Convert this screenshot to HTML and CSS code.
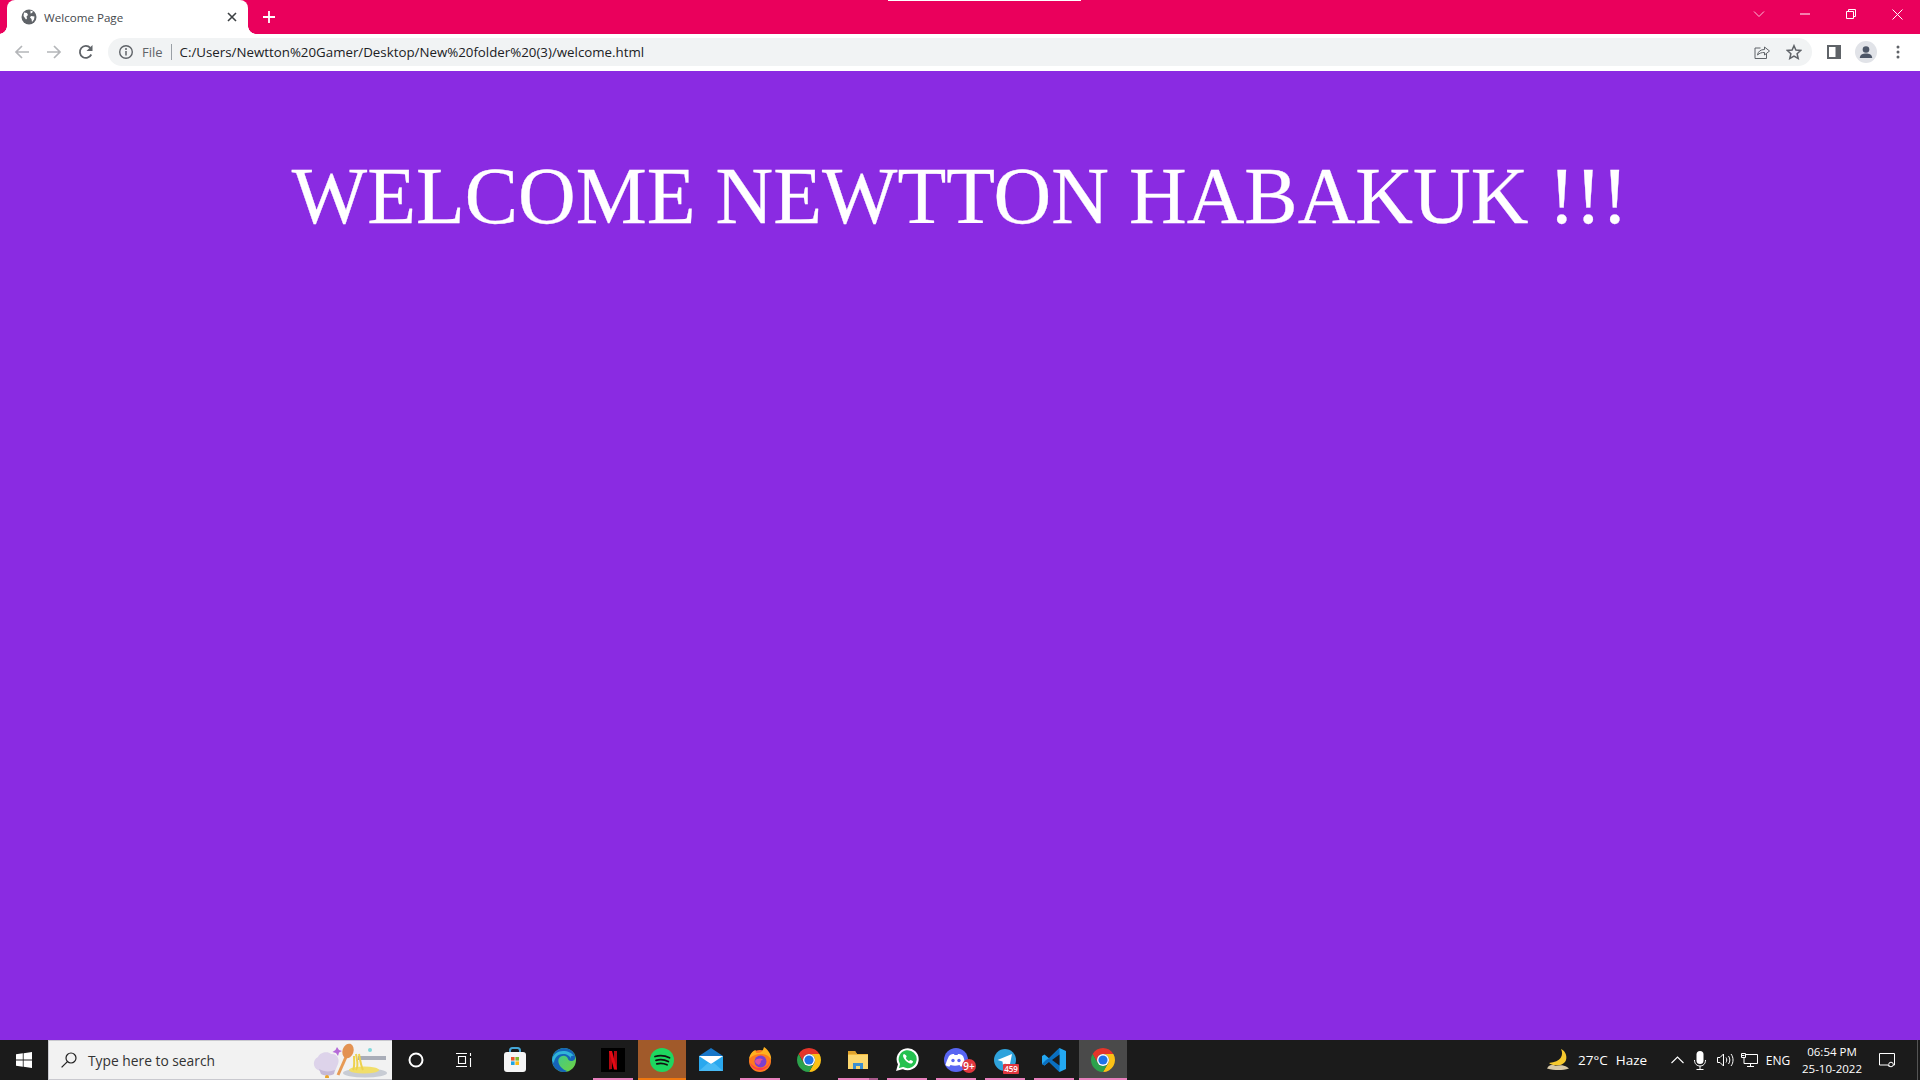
FILE: index.html
```html
<!DOCTYPE html>
<html lang="en">
<head>
<meta charset="utf-8">
<title>Welcome Page</title>
<link rel="stylesheet" href="styles.css">
</head>
<body>
<div class="share-bar"></div>
<header class="titlebar">
  <div class="tab">
    <svg class="tab-favicon" viewBox="0 0 16 16"><circle cx="8" cy="8" r="7.500" fill="#5f6368"/><path d="M3 3.500l3 .5 1 2-1.500 1.500.5 2-1 1-2.500-3.500zM9.500 1.500l2.500 1-1 1.500-1.500.5zM10 7l3.500.5-.5 3-2 2.500-.5-3-1.500-1.500z" fill="#fff"/></svg>
    <span class="tab-title">Welcome Page</span>
    <svg class="tab-close" viewBox="0 0 10 10"><path d="M1 1l8 8M9 1l-8 8" stroke="#3c4043" stroke-width="1.600"/></svg>
  </div>
  <svg class="new-tab" viewBox="0 0 12 12"><path d="M6 0v12M0 6h12" stroke="#fff" stroke-width="1.800"/></svg>
  <div class="window-controls">
    <div class="win-btn"><svg width="12" height="8" viewBox="0 0 12 8"><path d="M1 1.500l5 5 5-5" fill="none" stroke="#fbc0d8" stroke-width="1"/></svg></div>
    <div class="win-btn"><svg width="10" height="2" viewBox="0 0 10 2"><path d="M0 1h10" stroke="#fff" stroke-width="1"/></svg></div>
    <div class="win-btn"><svg width="10" height="10" viewBox="0 0 10 10"><path d="M.5 2.500h7v7h-7zM2.500 2.500V.5h7v7h-2" fill="none" stroke="#fff" stroke-width="1"/></svg></div>
    <div class="win-btn"><svg width="11" height="11" viewBox="0 0 11 11"><path d="M.5.5l10 10M10.500.5l-10 10" stroke="#fff" stroke-width="1"/></svg></div>
  </div>
</header>
<nav class="toolbar">
  <div class="tool-btn"><svg width="16" height="16" viewBox="0 0 16 16"><path d="M15 8H2M8 2L2 8l6 6" fill="none" stroke="#b4b6b9" stroke-width="1.700"/></svg></div>
  <div class="tool-btn"><svg width="16" height="16" viewBox="0 0 16 16"><path d="M1 8h13M8 2l6 6-6 6" fill="none" stroke="#b4b6b9" stroke-width="1.700"/></svg></div>
  <div class="tool-btn"><svg width="16" height="16" viewBox="0 0 16 16"><path d="M13.300 10.500A6 6 0 1 1 12.300 3.800" fill="none" stroke="#5f6368" stroke-width="1.800"/><path d="M14.500 1v6h-6z" fill="#5f6368"/></svg></div>
  <div class="omnibox">
    <svg class="info-icon" viewBox="0 0 16 16"><circle cx="8" cy="8" r="6.300" fill="none" stroke="#5f6368" stroke-width="1.400"/><path d="M8 7v4.500" stroke="#5f6368" stroke-width="1.500"/><circle cx="8" cy="4.900" r="1" fill="#5f6368"/></svg>
    <span class="scheme">File</span>
    <span class="omni-sep"></span>
    <span class="url">C:/Users/Newtton%20Gamer/Desktop/New%20folder%20(3)/welcome.html</span>
    <div class="omni-actions">
      <div class="tool-btn"><svg width="16" height="16" viewBox="0 0 16 16"><path d="M6.500 4H1v10.500h11.500V10" fill="none" stroke="#5f6368" stroke-width="1"/><path d="M3.500 11c.5-3.500 3-5.500 7-5.500V3l5 4-5 4V8.500c-3 0-5 .5-7 2.500z" fill="none" stroke="#5f6368" stroke-width="1"/></svg></div>
      <div class="tool-btn"><svg width="16" height="16" viewBox="0 0 16 16"><path d="M8 1.700l1.900 4.400 4.800.4-3.600 3.200 1.100 4.700L8 12l-4.200 2.400 1.100-4.700L1.300 6.500l4.800-.4z" fill="none" stroke="#5f6368" stroke-width="1.500"/></svg></div>
    </div>
  </div>
  <div class="tool-end">
    <div class="tool-btn"><svg width="14" height="14" viewBox="0 0 14 14"><path d="M0 0h14v14H0zM2 2v10h6.500V2z" fill="#5f6368" fill-rule="evenodd"/></svg></div>
    <div class="tool-btn"><svg width="22" height="22" viewBox="0 0 22 22"><circle cx="11" cy="11" r="11" fill="#e1e3e8"/><circle cx="11" cy="8.500" r="3.300" fill="#4d5667"/><path d="M4.800 17c0-3.500 3-4.600 6.200-4.600s6.200 1.100 6.200 4.600z" fill="#4d5667"/></svg></div>
    <div class="tool-btn"><svg width="4" height="14" viewBox="0 0 4 14"><circle cx="2" cy="2" r="1.500" fill="#5f6368"/><circle cx="2" cy="7" r="1.500" fill="#5f6368"/><circle cx="2" cy="12" r="1.500" fill="#5f6368"/></svg></div>
  </div>
</nav>
<main class="page">
  <h1 class="welcome">WELCOME NEWTTON HABAKUK !!!</h1>
</main>
<footer class="taskbar">
  <div class="start"><svg width="16" height="16" viewBox="0 0 16 16"><path d="M0 2.300l6.800-1v6.300H0zM7.600 1.200L16 0v7.600H7.600zM0 8.400h6.800v6.300l-6.800-1zM7.600 8.400H16V16l-8.400-1.200z" fill="#fff"/></svg></div>
  <div class="search">
    <svg class="search-icon" viewBox="0 0 16 16"><circle cx="10" cy="6" r="5" fill="none" stroke="#222" stroke-width="1.200"/><path d="M6.400 9.600L.6 15.400" stroke="#222" stroke-width="1.300"/></svg>
    <span class="search-text">Type here to search</span>
    <svg class="search-art" width="78" height="36" viewBox="0 0 78 36">
      <path d="M7 28c-5-2-6-10 0-13 2-5 10-6 13-3 6-1 9 5 7 10l-3 7c-5 2-12 2-17-1z" fill="#ddd3ea"/><path d="M8 27c5 3 11 3 16 1l-1 4c-4 2-9 2-13 0z" fill="#c4b8d6"/>
      <path d="M27 33l8-18" stroke="#e79a55" stroke-width="3"/><ellipse cx="37" cy="9" rx="5.500" ry="7.500" transform="rotate(18 37 9)" fill="#e39252"/>
      <path d="M26 5l2 3 3 1-3 1.500-1 3.500-2-3-3.500-1 3-2z" fill="#b56ad8"/><circle cx="59" cy="8" r="2" fill="#7fd8dc"/><circle cx="16" cy="35" r="2" fill="#eaa32a"/>
      <path d="M47 14h28v4H47z" fill="#a9adb8"/><ellipse cx="54" cy="31" rx="22" ry="4.500" fill="#c8ccd4"/><ellipse cx="53" cy="28" rx="15" ry="3.500" fill="#f1de6a"/><path d="M45 12c1 6 3 12 0 16M48 12c1 6 2 12 4 16M43 14c0 6 1 10 -1 14" fill="none" stroke="#eed24e" stroke-width="2"/>
    </svg>
  </div>
  <div class="sys-cell"><svg width="16" height="16" viewBox="0 0 16 16"><circle cx="8" cy="8" r="6.500" fill="none" stroke="#fff" stroke-width="2"/></svg></div>
  <div class="sys-cell"><svg width="16" height="14" viewBox="0 0 16 14"><path d="M0 .5h11M0 13.500h11M2.500 3.500h7v7h-7zM14.500 0v3M14.500 5v9" fill="none" stroke="#fff" stroke-width="1.100"/></svg></div>
  <div class="apps">
    <div class="app"><svg width="24" height="26" viewBox="0 0 24 26"><path d="M7 7V3.500C7 2 8 1 9.500 1h5C16 1 17 2 17 3.500V7" fill="none" stroke="#44a6d8" stroke-width="2"/><rect x="1" y="5" width="22" height="20" rx="3" fill="#f5f5f5"/><path d="M8 10h3.600v3.600H8z" fill="#e8552a"/><path d="M12.400 10H16v3.600h-3.600z" fill="#7dba2c"/><path d="M8 14.400h3.600V18H8z" fill="#1ca4e4"/><path d="M12.400 14.400H16V18h-3.600z" fill="#fcbb12"/></svg></div>
    <div class="app"><svg width="24" height="24" viewBox="0 0 24 24"><defs><linearGradient id="eg" x1="0" y1="0" x2="1" y2="1"><stop offset="0" stop-color="#2fc6a8"/><stop offset="1" stop-color="#71d23c"/></linearGradient></defs><circle cx="12" cy="12" r="12" fill="url(#eg)"/><path d="M0 12C0 5 6 0 12 0c5 0 10 3 11 8 1 3-1 5-4 5-4 0-2-4-6-5-5-1-8 3-6 8 1 3 5 6 8 7-1 1-2 1-3 1C5 24 0 18 0 12z" fill="#1563b8"/><path d="M0 12C1 6 6 3 11 3s9 2 11 5c-2-1-4 0-3 3-1-3-4-5-8-5-6 0-9 5-9 9-1-1-2-2-2-3z" fill="#30b4d8"/></svg></div>
    <div class="app has-run"><svg width="24" height="24" viewBox="0 0 24 24"><path d="M0 0h24v24H0z" fill="#000"/><path d="M8 3h3v18l-3 .5zM13 3h3v18.500l-3-.5z" fill="#b20710"/><path d="M8 3h3l5 18.500h-3z" fill="#e50914"/></svg></div>
    <div class="app app-hot"><svg width="24" height="24" viewBox="0 0 24 24"><circle cx="12" cy="12" r="12" fill="#1ed760"/><path d="M5 8.500c5-1.500 10-1 14.500 1.300M6 12.300c4-1.200 8.500-.8 12.300 1.200M6.800 15.800c3.500-.9 7-.6 10.200 1" fill="none" stroke="#111" stroke-width="1.800" stroke-linecap="round"/></svg></div>
    <div class="app"><svg width="24" height="23" viewBox="0 0 24 23"><path d="M0 8L12 0l12 8v15H0z" fill="#1776c8"/><path d="M0 8h24v15H0z" fill="#2aa8ee"/><path d="M0 8h24L12 16z" fill="#fff"/><path d="M0 23l9-8 3 1 3-1 9 8z" fill="#48baf5"/></svg></div>
    <div class="app has-run"><svg width="24" height="25" viewBox="0 0 24 25"><circle cx="12" cy="14" r="11" fill="#ff7a1f"/><path d="M1 12C2 6 6 3 8 3c-1 2 0 3 2 3 3 0 5-2 6-6 3 2 8 7 7 13-1-3-3-4-3-4-4-3-14-3-19 3z" fill="#ffb01f"/><circle cx="12.500" cy="14.500" r="6" fill="#7a3fcf"/><path d="M7 14c2-3 6-3 8-1-2 0-3 1-2 2l-2 3c-2-1-4-2-4-4z" fill="#e04fa0"/><path d="M2 16c2 6 8 8 12 7 4-1 8-5 8-9-2 6-6 7-10 7s-7-2-10-5z" fill="#ff3d4a"/></svg></div>
    <div class="app"><svg width="24" height="24" viewBox="0 0 24 24"><path d="M12 6h10.390a12 12 0 0 0-20.780 0L6.800 15A6 6 0 0 1 12 6z" fill="#e5352b"/><path d="M12 6h10.390A12 12 0 0 1 12 24l5.200-9A6 6 0 0 0 12 6z" fill="#fbc116"/><path d="M6.800 15L1.610 6A12 12 0 0 0 12 24l5.200-9a6 6 0 0 1-10.400 0z" fill="#2ca24c"/><circle cx="12" cy="12" r="6" fill="#fff"/><circle cx="12" cy="12" r="4.600" fill="#1f73e8"/></svg></div>
    <div class="app has-run files"><svg width="22" height="20" viewBox="0 0 22 20"><path d="M1 1h7l2 3h11v15H1z" fill="#f2b93e"/><path d="M1 5h20v14H1z" fill="#fcd76f"/><path d="M1 1h7l2 3H1z" fill="#e0a32c"/><path d="M6 19v-6h10v6h-3v-3H9v3z" fill="#3c8fd0"/></svg></div>
    <div class="app has-run"><svg width="23" height="23" viewBox="0 0 23 23"><path d="M1.500 21.500l1.500-5.300A10 10 0 1 1 6.900 20z" fill="#25c14f" stroke="#fff" stroke-width="2"/><path d="M8 6c-1 .5-1.500 2 0 4.500S12 15 14 15.500c2 .5 3-1 3-2 0-.5-2-1.500-2.500-1.500s-1 1-1.500 1-3-2-3-3 1-1 .5-2S8.500 6 8 6z" fill="#fff"/></svg></div>
    <div class="app has-run"><svg width="24" height="24" viewBox="0 0 24 24"><circle cx="12" cy="12" r="12" fill="#5865f2"/><path d="M5 8c2-2 4-2 5-2l.5 1h3l.5-1c1 0 3 0 5 2 1 2 2 5 1.500 9-1 1-3 1.500-4 1.500l-1-1.500c-3 1-6 1-9 0l-1 1.500c-1 0-3-.5-4-1.500C2.500 13 4 10 5 8z" fill="#fff"/><circle cx="9" cy="12.500" r="1.700" fill="#5865f2"/><circle cx="15" cy="12.500" r="1.700" fill="#5865f2"/></svg><span class="badge badge-round">9+</span></div>
    <div class="app has-run"><svg width="22" height="22" viewBox="0 0 22 22"><circle cx="11" cy="11" r="11" fill="#2fa3dc"/><path d="M3.500 11L18 5l-2.500 12.500-4.500-3-2 2-.5-4z" fill="#fff"/></svg><span class="badge badge-wide">459</span></div>
    <div class="app has-run"><svg width="24" height="24" viewBox="0 0 24 24"><path d="M17.500 0L24 3v18l-6.500 3L7 13.800 2.500 17.500 0 16V8l2.500-1.500L7 10.200z" fill="#23a8f2"/><path d="M17.500 0v24L7 13.800 2.500 17.500 0 16l4-4 3-1.800z" fill="#0a6fc0"/><path d="M17.500 6.500v11L10 12z" fill="#1b1b1b"/></svg></div>
    <div class="app has-run app-active"><svg width="24" height="24" viewBox="0 0 24 24"><path d="M12 6h10.390a12 12 0 0 0-20.780 0L6.800 15A6 6 0 0 1 12 6z" fill="#e5352b"/><path d="M12 6h10.390A12 12 0 0 1 12 24l5.200-9A6 6 0 0 0 12 6z" fill="#fbc116"/><path d="M6.800 15L1.610 6A12 12 0 0 0 12 24l5.200-9a6 6 0 0 1-10.400 0z" fill="#2ca24c"/><circle cx="12" cy="12" r="6" fill="#fff"/><circle cx="12" cy="12" r="4.600" fill="#1f73e8"/></svg></div>
  </div>
  <div class="tray">
    <div class="weather">
      <svg width="24" height="24" viewBox="0 0 24 24"><path d="M15 1c3 6 0 13-12 14 3 3 12 4 16-1 3-4 1-11-4-13z" fill="#f6c92e"/><path d="M2 19c2-3 6-2 8-1 3-1 8-1 11 1l2 1.500c-7 2-14 2-22 0z" fill="#d8c9a8"/></svg>
      <span class="temp">27°C</span><span class="haze">Haze</span>
    </div>
    <div class="tray-chev"><svg width="13" height="8" viewBox="0 0 13 8"><path d="M.5 7l6-6 6 6" fill="none" stroke="#fff" stroke-width="1.100"/></svg></div>
    <div class="tray-mic"><svg width="12" height="19" viewBox="0 0 12 19"><rect x="2.500" y="0" width="7" height="13" rx="3.500" fill="#fff"/><path d="M.5 9c0 4 2.500 6 5.500 6s5.500-2 5.500-6M6 15v3.500M2.500 18.500h7" fill="none" stroke="#fff" stroke-width="1"/></svg></div>
    <div class="tray-vol"><svg width="17" height="14" viewBox="0 0 17 14"><path d="M.5 4.500h2.500L6.500 1v12L3 9.500H.5z" fill="none" stroke="#fff"/><path d="M9 4.500c1 1.500 1 3.500 0 5M11.500 3c1.800 2.500 1.800 5.500 0 8M14 1c2.700 3.500 2.700 8.500 0 12" fill="none" stroke="#fff"/></svg></div>
    <div class="tray-net"><svg width="17" height="14" viewBox="0 0 17 14"><path d="M.5 2.500h3M5 1.500h11.500v9H3V5M9.500 10.500v3M6 13.500h7" fill="none" stroke="#fff"/><path d="M.5.500h4v4h-4z" fill="none" stroke="#fff"/></svg></div>
    <div class="tray-lang">ENG</div>
    <div class="clock"><span>06:54 PM</span><span>25-10-2022</span></div>
    <div class="tray-note"><svg width="16" height="16" viewBox="0 0 16 16"><path d="M.5 1.500h15v11.500h-4l-1 2-1.500-2H.5z" fill="none" stroke="#fff"/><circle cx="12" cy="12.500" r="2.300" fill="#1b1b1b" stroke="#fff"/></svg></div>
    <div class="show-desktop"></div>
  </div>
</footer>
</body>
</html>
```

FILE: styles.css
```css
* { box-sizing: border-box; }
html, body { margin: 0; height: 100%; }
body {
  display: flex;
  flex-direction: column;
  height: 1080px;
  overflow: hidden;
  background: #8a2be2;
  font-family: "Open Sans", "Liberation Sans", sans-serif;
}
.share-bar {
  position: absolute;
  top: 0;
  left: 888px;
  width: 193px;
  height: 1px;
  background: #fff;
}
.titlebar {
  display: flex;
  align-items: center;
  height: 34px;
  flex: none;
  background: #ea005c;
}
.tab {
  position: relative;
  display: flex;
  align-items: center;
  align-self: flex-end;
  width: 241px;
  height: 34px;
  margin-left: 7px;
  padding: 0 11px 0 14px;
  background: #fff;
  border-radius: 8px 8px 0 0;
}
.tab::before, .tab::after {
  content: "";
  position: absolute;
  bottom: 0;
  width: 8px;
  height: 8px;
}
.tab::before { left: -8px; background: radial-gradient(circle at 0 0, transparent 7.500px, #fff 8px); }
.tab::after { right: -8px; background: radial-gradient(circle at 100% 0, transparent 7.500px, #fff 8px); }
.tab-favicon { width: 16px; height: 16px; flex: none; }
.tab-title { margin-left: 7px; flex: 1; font-size: 11.600px; color: #45494d; }
.tab-close { width: 10px; height: 10px; flex: none; }
.new-tab { width: 12px; height: 12px; margin-left: 15px; }
.window-controls { display: flex; margin-left: auto; align-self: stretch; }
.win-btn { display: flex; align-items: center; justify-content: center; width: 46px; padding-bottom: 6px; }
.toolbar {
  display: flex;
  align-items: center;
  flex: none;
  height: 37px;
  padding: 4px 6px 5px;
  background: #fff;
}
.tool-btn { display: flex; align-items: center; justify-content: center; width: 32px; height: 28px; flex: none; }
.omnibox {
  display: flex;
  align-items: center;
  flex: 1;
  height: 28px;
  margin: 0 6px;
  padding: 0 2px 0 10px;
  border-radius: 14px;
  background: #f1f3f4;
}
.info-icon { width: 16px; height: 16px; flex: none; }
.scheme { margin-left: 8px; font-size: 13px; color: #5f6368; }
.omni-sep { width: 1px; height: 16px; margin: 0 8px; background: #9aa0a6; }
.url { font-size: 13.300px; color: #202124; }
.omni-actions { display: flex; margin-left: auto; }
.tool-end { display: flex; }
.page { flex: 1; }
.welcome {
  margin: 79px 0 0;
  text-align: center;
  font-family: "Liberation Serif", serif;
  font-size: 79.900px;
  font-weight: 400;
  line-height: 92px;
  color: #fff;
  -webkit-text-stroke: 0.3px #fff;
}
.taskbar {
  display: flex;
  align-items: stretch;
  flex: none;
  height: 40px;
  background: #1b1b1b;
  color: #fff;
}
.start { display: flex; align-items: center; justify-content: center; width: 48px; }
.search {
  display: flex;
  align-items: center;
  width: 344px;
  padding: 0 3px 0 12px;
  background: #f2f2f2;
  border: 1px solid #c9c9cf;
  border-width: 1px 0 1px 1px;
  color: #333;
}
.search-icon { width: 16px; height: 16px; flex: none; }
.search-text { margin-left: 11px; font-size: 13.800px; flex: 1; }
.sys-cell { display: flex; align-items: center; justify-content: center; width: 48px; }
.apps { display: flex; gap: 1px; margin-left: 3px; }
.app { position: relative; display: flex; align-items: center; justify-content: center; width: 48px; padding-bottom: 1px; }
.has-run::after {
  content: "";
  position: absolute;
  left: 4px;
  right: 4px;
  bottom: 0;
  height: 2px;
  background: #e77fbd;
}
.files::before {
  content: "";
  position: absolute;
  right: 4px;
  bottom: 0;
  width: 9px;
  height: 2px;
  background: #a85a8c;
  z-index: 1;
}
.app-hot { background: #a15a2a; box-shadow: inset 0 -2px #f0780f; }
.app-active { background: #4a4a4a; }
.app-active::after { left: 0; right: 0; }
.badge {
  position: absolute;
  color: #fff;
  background: #e0373f;
  font-size: 10px;
  font-weight: 600;
  text-align: center;
}
.badge-round { left: 30px; bottom: 7px; width: 14px; height: 14px; line-height: 14px; border-radius: 50%; }
.badge-wide { left: 22px; bottom: 6px; width: 16px; height: 10px; line-height: 10px; font-size: 8px; border-radius: 1px; }
.tray { display: flex; align-items: stretch; margin-left: auto; font-size: 13.500px; }
.tray > div { display: flex; align-items: center; justify-content: center; }
.tray > .weather { width: 120px; padding-left: 2px; justify-content: flex-start; }
.temp { margin-left: 8px; }
.haze { margin-left: 8px; }
.tray-chev { width: 26px; }
.tray-mic { width: 20px; }
.tray-vol { width: 30px; }
.tray-net { width: 18px; }
.tray > .tray-lang { width: 40px; font-size: 12px; }
.tray > .clock { flex-direction: column; width: 68px; font-size: 11.500px; line-height: 17px; }
.tray-note { width: 42px; }
.show-desktop { width: 12px; }
.show-desktop::after { content: ""; width: 1px; height: 100%; margin-left: 7px; background: #555; }
```
